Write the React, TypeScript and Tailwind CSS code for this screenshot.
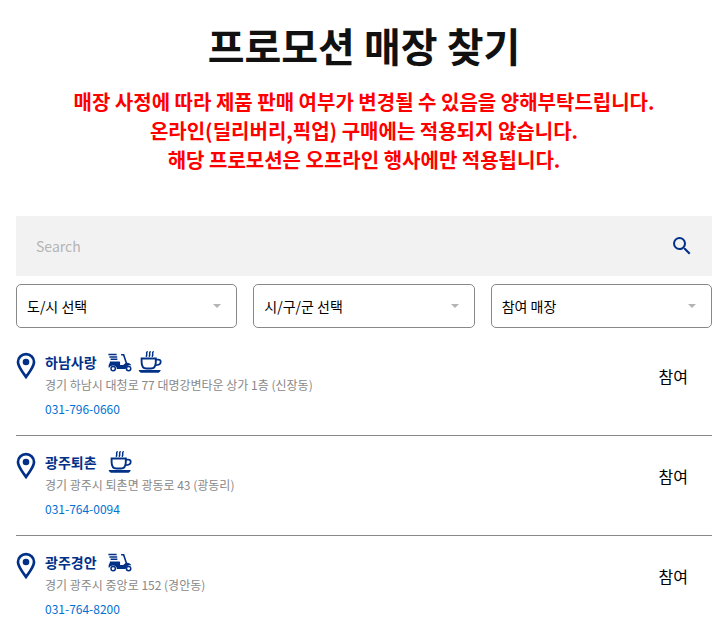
import React from 'react';
import { MdSearch } from 'react-icons/md';

type Service = 'delivery' | 'morning';

interface Store {
  name: string;
  address: string;
  phone: string;
  services: Service[];
  status: string;
}

const stores: Store[] = [
  {
    name: '하남사랑',
    address: '경기 하남시 대청로 77 대명강변타운 상가 1층 (신장동)',
    phone: '031-796-0660',
    services: ['delivery', 'morning'],
    status: '참여'
  },
  {
    name: '광주퇴촌',
    address: '경기 광주시 퇴촌면 광동로 43 (광동리)',
    phone: '031-764-0094',
    services: ['morning'],
    status: '참여'
  },
  {
    name: '광주경안',
    address: '경기 광주시 중앙로 152 (경안동)',
    phone: '031-764-8200',
    services: ['delivery'],
    status: '참여'
  }
];

const filters = [
  { id: 'city', label: '도/시 선택' },
  { id: 'district', label: '시/구/군 선택' },
  { id: 'type', label: '참여 매장' }
];

const PinIcon: React.FC = () => (
  <svg viewBox="0 0 20 28" className="mt-4 h-7 w-5 shrink-0" fill="none" aria-hidden="true">
    <path
      d="M10 2.2C5.4 2.2 2 5.6 2 9.9c0 2.6 1.5 5.3 3.3 8.2 1.5 2.5 3.2 4.8 4.7 6.8 1.5-2 3.2-4.3 4.7-6.8 1.8-2.9 3.3-5.6 3.3-8.2 0-4.3-3.4-7.7-8-7.7Z"
      stroke="#003087"
      strokeWidth="2.7"
    />
    <circle cx="10" cy="10" r="3.3" fill="#003087" />
  </svg>
);

const ScooterIcon: React.FC = () => (
  <svg viewBox="0 0 24 24" className="size-6" fill="none" stroke="#003087" role="img" aria-label="배달">
    <path d="M.4 4.5h8.2M1.4 7h7.8M2.6 9.3h6.8" strokeWidth="1.4" />
    <path
      d="M1.8 11.4h9.4c.6 0 .9.3.9.9v2.6h3.2l2.2-1.8-2.5-7.5h-1.9V4.1h3.1l2.9 8.6c2 .1 3.5 1 4.3 2.7-3.1-.6-5.2.7-5.8 3.6H8.9c-.2-2.2-1.6-3.4-3.8-3.4-2 0-3.3.9-4.2 2.7-.6-2.4-.3-4.2.9-5.4v-1.5Z"
      fill="#003087"
      stroke="none"
    />
    <circle cx="5.2" cy="18.6" r="2.2" strokeWidth="1.5" />
    <circle cx="20.6" cy="18.6" r="2.2" strokeWidth="1.5" />
  </svg>
);

const CoffeeIcon: React.FC = () => (
  <svg viewBox="0 0 24 24" className="size-6" fill="none" stroke="#003087" role="img" aria-label="맥모닝">
    <path
      d="M9.2 1.8c-1.6 1.6.5 2.4-.9 4.4M12.2 1.8c-1.6 1.6.5 2.4-.9 4.4M15.2 1.8c-1.6 1.6.5 2.4-.9 4.4"
      strokeWidth="1.5"
      strokeLinecap="round"
    />
    <path d="M3.6 8.5h14.2v3.5c0 4.2-1.8 6.5-4.8 6.5H8.4c-3 0-4.8-2.3-4.8-6.5V8.5Z" strokeWidth="1.9" />
    <path d="M17.8 9.6h2.4c1.6 0 2.5.8 2.5 2.1 0 2.1-2 3.5-5.6 3.5" strokeWidth="1.8" />
    <path d="M.7 20h22c-.4 1.9-1.5 2.8-3.4 2.8H4.1C2.2 22.800 1.100 21.900.7 20Z" fill="#003087" stroke="none" />
  </svg>
);

const StoreRow: React.FC<{ store: Store }> = ({ store }) => (
  <li className="flex border-b border-[#888] pb-[14px] last:border-b-0 last:pb-0">
    <PinIcon />
    <div className="min-w-0 flex-1 pt-[13px] pl-[9px]">
      <div className="flex h-[26px] items-center">
        <h2 className="text-sm font-bold text-[#003087]">{store.name}</h2>
        <div className="ml-[11px] flex gap-[6px]">
          {store.services.map((service) =>
            service === 'delivery' ? <ScooterIcon key={service} /> : <CoffeeIcon key={service} />
          )}
        </div>
      </div>
      <p className="text-xs leading-5 text-[#888]">{store.address}</p>
      <a href={`tel:${store.phone}`} className="block w-fit pt-[2px] text-xs leading-6 text-[#0070d2]">
        {store.phone}
      </a>
    </div>
    <p className="pt-7 pr-6 text-base leading-6 text-black">{store.status}</p>
  </li>
);

const App: React.FC = () => {
  return (
    <main className="bg-white pr-[10px] pl-4 font-['Noto_Sans_CJK_KR','Noto_Sans',sans-serif] text-black">
      <header className="pt-5 text-center">
        <h1 className="text-[40px] leading-[50px] font-bold text-[#111]">프로모션 매장 찾기</h1>
        <p className="mt-[17px] text-[20px] leading-[29px] font-bold text-[#f00]">
          매장 사정에 따라 제품 판매 여부가 변경될 수 있음을 양해부탁드립니다.
          <br />
          온라인(딜리버리,픽업) 구매에는 적용되지 않습니다.
          <br />
          해당 프로모션은 오프라인 행사에만 적용됩니다.
        </p>
      </header>

      {/* Search */}
      <form className="mt-[42px] flex h-[60px] items-center bg-[#f2f2f2] pr-[18px] pl-5" role="search">
        <input
          type="search"
          aria-label="Search"
          placeholder="Search"
          className="h-full min-w-0 flex-1 bg-transparent text-sm outline-none placeholder:text-[#b4b4b4]"
        />
        <button type="button" aria-label="검색" className="text-[#003087]">
          <MdSearch size={24} />
        </button>
      </form>

      {/* Filters */}
      <div className="mt-2 grid grid-cols-3 gap-4">
        {filters.map((filter) => (
          <div key={filter.id} className="relative">
            <select
              id={filter.id}
              aria-label={filter.label}
              className="h-11 w-full appearance-none rounded-[5px] border border-[#888] bg-white pr-8 pl-[10px] text-sm text-black"
            >
              <option>{filter.label}</option>
            </select>
            <svg viewBox="0 0 8 4" className="pointer-events-none absolute top-5 right-4 h-1 w-2" aria-hidden="true">
              <path d="M0 0h8L4 4Z" fill="#b4b4b4" />
            </svg>
          </div>
        ))}
      </div>

      {/* Stores */}
      <ul className="mt-2">
        {stores.map((store) => (
          <StoreRow key={store.name} store={store} />
        ))}
      </ul>
    </main>
  );
};

export default App;
